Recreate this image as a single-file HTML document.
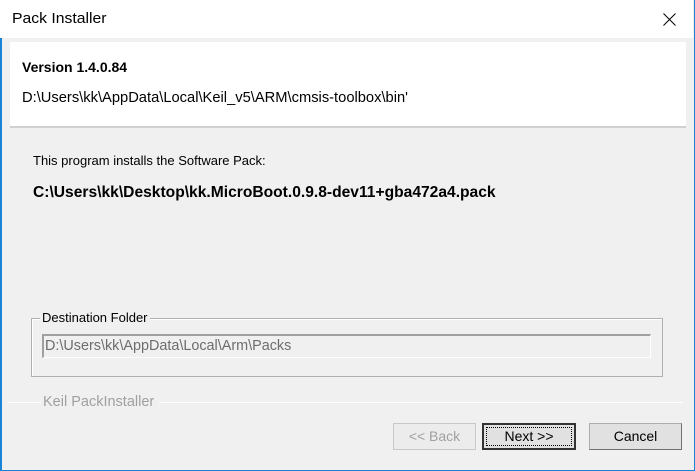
<!DOCTYPE html>
<html><head><meta charset="utf-8"><style>
*{margin:0;padding:0;box-sizing:border-box}
body{width:695px;height:471px;overflow:hidden;background:#f0f0f0;font-family:"Liberation Sans",Arial,sans-serif;font-size:12px;color:#000;position:relative}
.win{position:absolute;left:0;top:0;width:695px;height:471px;border:1px solid #1883d7;border-top:none;border-left:2px solid #1883d7;background:#f0f0f0}
.title{position:absolute;left:0;top:0;width:693px;height:38px;background:#fff}
.t{position:absolute;white-space:nowrap;transform-origin:0 0}
.hdr{position:absolute;left:10px;top:42px;width:676px;height:86px;background:#fff;border-bottom:2px solid #d0d0d0}
.grp{position:absolute;left:31px;top:318px;width:632px;height:59px;border:1px solid #b0b0b0;box-shadow:inset 1px 1px #fff}
.tb{position:absolute;left:42px;top:334px;width:609px;height:24px;border-top:2px solid #a0a0a0;border-left:2px solid #a0a0a0;border-bottom:1px solid #fff;border-right:1px solid #fff;background:#f0f0f0}
.sep{position:absolute;top:402px;height:1px;background:#a0a0a0;border-bottom:1px solid #fff}
.btn{position:absolute;top:423px;height:27px;background:#e1e1e1;border:1px solid #adadad;border-right-color:#707070;border-bottom-color:#707070;text-align:center;line-height:25px;font-size:14px}
</style></head><body>
<div class="win"></div>
<div class="title"></div>
<div class="t" style="left:12px;top:10px;font-size:15px;transform:scaleX(1.05)">Pack Installer</div>
<svg style="position:absolute;left:663px;top:13px" width="13" height="13"><path d="M0.5 0.5L12.5 12.5M12.5 0.5L0.5 12.5" stroke="#000" stroke-width="1"/></svg>
<div class="hdr"></div>
<div class="t" style="left:22px;top:59px;font-weight:bold;font-size:14px">Version 1.4.0.84</div>
<div class="t" style="left:22px;top:89px;font-size:15px;transform:scaleX(0.98)">D:\Users\kk\AppData\Local\Keil_v5\ARM\cmsis-toolbox\bin'</div>
<div class="t" style="left:33px;top:153px;font-size:13px">This program installs the Software Pack:</div>
<div class="t" style="left:33px;top:184px;font-weight:bold;font-size:16px;transform:scaleX(0.975)">C:\Users\kk\Desktop\kk.MicroBoot.0.9.8-dev11+gba472a4.pack</div>
<div class="grp"></div>
<div class="t" style="left:40px;top:310px;background:#f0f0f0;padding:0 2px;font-size:13px">Destination Folder</div>
<div class="tb"></div>
<div class="t" style="left:45px;top:338px;font-size:14.4px;color:#6d6d6d">D:\Users\kk\AppData\Local\Arm\Packs</div>
<div class="sep" style="left:7px;width:34px"></div>
<div class="t" style="left:41px;top:394px;color:#a0a0a0;padding:0 2px;font-size:14.5px;background:#f0f0f0">Keil PackInstaller</div>
<div class="sep" style="left:159px;width:524px"></div>
<div class="btn" style="left:393px;width:83px;color:#a0a0a0;background:#ececec;border-color:#c8c8c8">&lt;&lt; Back</div>
<div class="btn" style="left:482px;width:94px;border:2px solid #333"><span style="border:1px dotted #000;display:block;margin:2px;line-height:17px">Next &gt;&gt;</span></div>
<div class="btn" style="left:589px;width:93px">Cancel</div>
</body></html>
